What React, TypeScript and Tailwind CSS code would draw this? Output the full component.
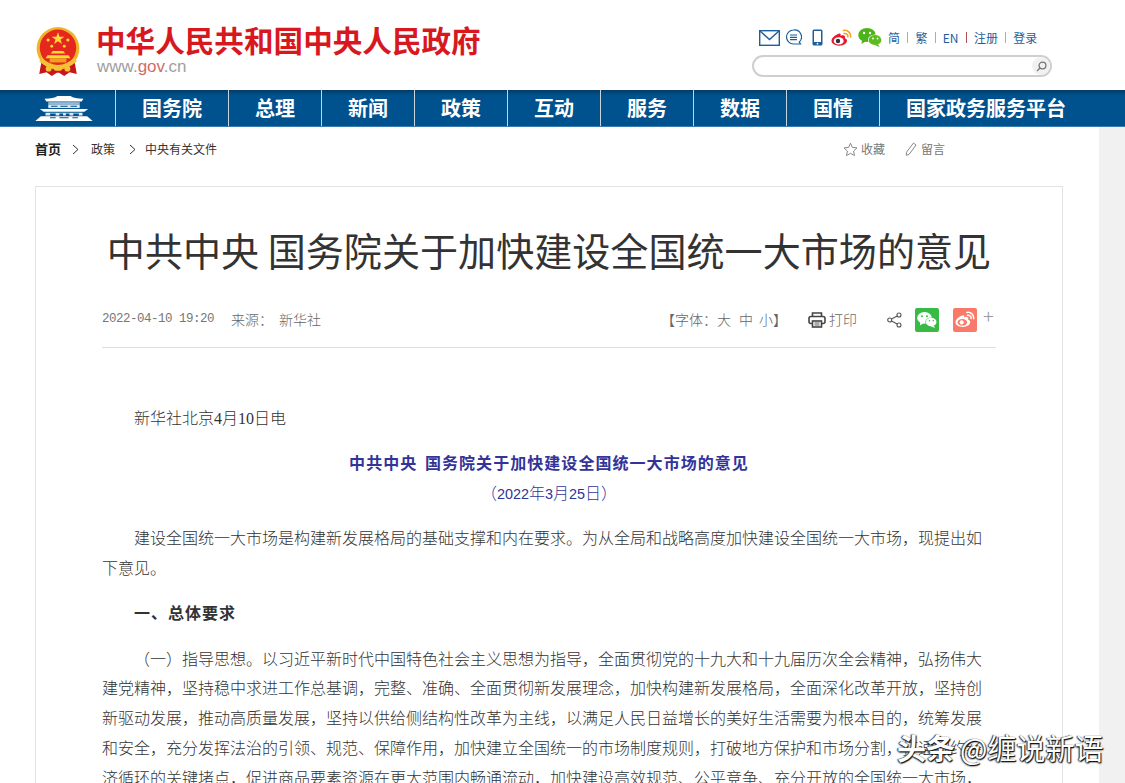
import React from "react";

const cjk = { fontFamily: '"Noto Sans CJK SC", sans-serif' };

function Emblem() {
  return (
    <svg width="46" height="49" viewBox="0 0 44 47" className="shrink-0">
      <path d="M6 34 L4 45 L11 43.5 L16 47 L21 44 L23 44 L28 47 L33 43.5 L40 45 L38 34 Z" fill="#c8161d" />
      <circle cx="22" cy="20.5" r="20.5" fill="#f0b429" />
      <circle cx="22" cy="20" r="17.5" fill="#e5281e" />
      <path d="M6 29 Q22 44 38 29 L40 33 Q22 48 4 33 Z" fill="#f4c233" />
      <path d="M22 5 l1.5 4.3 4.6 0 -3.7 2.7 1.4 4.4 -3.8-2.7 -3.8 2.7 1.4-4.4 -3.7-2.7 4.6 0 Z" fill="#ffd83a" />
      <circle cx="12.5" cy="12.5" r="1.5" fill="#ffd83a" />
      <circle cx="31.5" cy="12.5" r="1.5" fill="#ffd83a" />
      <circle cx="16" cy="18.5" r="1.4" fill="#ffd83a" />
      <circle cx="28" cy="18.5" r="1.4" fill="#ffd83a" />
      <path d="M17 23 h10 l2 2.5 h-14 Z M12 27 h20 l2 3 h-24 Z" fill="#ffd83a" />
      <path d="M14 30 h16 v4 h-16 Z" fill="#f0a020" />
      <circle cx="13" cy="40" r="2.8" fill="#f4c233" />
      <circle cx="31" cy="40" r="2.8" fill="#f4c233" />
      <rect x="18" y="38" width="8" height="4" rx="2" fill="#f4c233" />
    </svg>
  );
}

function Palace() {
  return (
    <svg width="60" height="25" viewBox="0 0 62 27" fill="#fff">
      <path d="M10 3 Q20 3 24 0 h14 Q42 3 52 3 L50 6 H12 Z" />
      <rect x="14" y="7" width="34" height="1.2" />
      <path d="M14 9 h34 v4 h-34 Z" fill="#dfe9f2" />
      <path d="M17 10.5 h7 v1 h-7 Z M27 10.5 h8 v1 h-8 Z M38 10.5 h7 v1 h-7 Z" fill="#00528f" />
      <path d="M5 14 H57 L53 17 H9 Z" />
      <path d="M11 18 h40 v3 h-40 Z" fill="#dfe9f2" />
      <path d="M16 19 h6 v3 h-6 Z M26 19 h4 v3 h-4 Z M33 19 h4 v3 h-4 Z M41 19 h6 v3 h-6 Z" fill="#00528f" />
      <path d="M6 22 H56 L62 27 H0 Z" />
      <path d="M16 23 h6 v1 h-6 Z M26 23 h10 v1 h-10 Z M40 23 h6 v1 h-6 Z" fill="#00528f" />
    </svg>
  );
}

function Mail() {
  return (
    <svg width="21" height="16" viewBox="0 0 21 16" fill="none" stroke="#1d5f9c" strokeWidth="1.4">
      <rect x="0.7" y="0.7" width="19.6" height="14.6" />
      <path d="M1 1 L10.5 9.5 L20 1" />
    </svg>
  );
}

function Chat() {
  return (
    <svg width="17" height="17" viewBox="0 0 17 17" fill="none" stroke="#1d5f9c" strokeWidth="1.2">
      <path d="M8.5 1 a7 7 0 1 0 0 14 h7 l-1.2-2 a7 7 0 0 0 -5.8-12 Z" />
      <path d="M5 6 h7 M5 8.3 h7 M5 10.6 h7" />
    </svg>
  );
}

function Phone() {
  return (
    <svg width="11" height="17" viewBox="0 0 11 17">
      <rect x="0.5" y="0.5" width="10" height="16" rx="1.5" fill="#1d5f9c" />
      <rect x="2" y="2" width="7" height="11" fill="#fff" />
      <circle cx="5.5" cy="14.7" r="0.9" fill="#fff" />
    </svg>
  );
}

function Weibo({ body = "#e6162d", eye = "#fff", arc = "#f5a11c", size = 21 }: { body?: string; eye?: string; arc?: string; size?: number }) {
  return (
    <svg width={size} height={(size * 17) / 21} viewBox="0 0 21 17">
      <path d="M8.5 4.5 C4.5 5.5 0.5 9 0.5 11.8 C0.5 14.7 4 16.7 8.2 16.7 C12.6 16.7 16 14.4 16 11.5 C16 9.9 14.6 9.5 13.8 9.2 C14.3 7.7 14 6.5 12.4 6.2 C11.2 6 9.8 6.6 9.5 6.7 C9.9 5.3 9.7 4.3 8.5 4.5 Z" fill={body} />
      <ellipse cx="7.7" cy="11.9" rx="5" ry="3.6" fill={eye} />
      <circle cx="7" cy="12" r="2.2" fill={body === "#fff" ? "#fff" : "#333"} />
      <path d="M12.5 1.5 C16 0.6 20 3.5 19.6 8" fill="none" stroke={arc} strokeWidth="1.6" strokeLinecap="round" />
      <path d="M13 4.5 C15 4 17.3 5.6 16.9 8" fill="none" stroke={arc} strokeWidth="1.5" strokeLinecap="round" />
    </svg>
  );
}

function Wechat({ a = "#4db31b", b = "#5cbc1e", eye = "#fff", edge = "#fff", w = 24, h = 19 }: { a?: string; b?: string; eye?: string; edge?: string; w?: number; h?: number }) {
  return (
    <svg width={w} height={h} viewBox="0 0 24 19">
      <ellipse cx="9" cy="7" rx="8.8" ry="7" fill={a} />
      <path d="M4 12 L3.5 16 L8 13 Z" fill={a} />
      <ellipse cx="17" cy="12" rx="7" ry="5.6" fill={edge} />
      <ellipse cx="17" cy="12" rx="6.4" ry="5.1" fill={b} />
      <path d="M20 16 L21.5 19 L16.5 17 Z" fill={b} />
      <circle cx="6" cy="5" r="1.2" fill={eye} />
      <circle cx="12" cy="5" r="1.2" fill={eye} />
      <circle cx="15" cy="10.5" r="0.9" fill={eye} />
      <circle cx="19.5" cy="10.5" r="0.9" fill={eye} />
    </svg>
  );
}

function Sep({ c }: { c: string }) {
  return <span className="w-px h-[11px] mx-[7.2px]" style={{ backgroundColor: c }} />;
}

const navItems = ["总理", "新闻", "政策", "互动", "服务", "数据", "国情"];

function Chevron() {
  return (
    <svg width="7" height="11" viewBox="0 0 7 11" fill="none" stroke="#333" strokeWidth="1">
      <path d="M1 1 L6 5.5 L1 10" />
    </svg>
  );
}

const serifDigit = { fontFamily: '"Liberation Serif", serif', fontWeight: 400 };
const sansDigit = { fontFamily: '"Liberation Sans", sans-serif', fontWeight: 400 };

export default function App() {
  return (
    <div className="h-[783px] w-[1125px] overflow-hidden bg-white relative" style={cjk}>
      <header className="h-[90px] flex justify-between pl-[35px] pr-[73px]">
        <div className="flex items-start pt-[26px]">
          <div className="pt-[1px]"><Emblem /></div>
          <div className="ml-[15px]">
            <div className="text-[29.6px] leading-[30px] font-bold text-[#d8181f] -mt-[1px]">中华人民共和国中央人民政府</div>
            <div className="text-[17px] leading-[18px] mt-[3px] ml-px text-[#a0a0a0]" style={{ fontFamily: '"Liberation Sans", sans-serif' }}>
              www.<span className="text-[#d36a6a]">gov</span>.cn
            </div>
          </div>
        </div>
        <div className="w-[300px] pt-[28px]">
          <div className="flex items-center h-[19px] pl-[7px]">
            <Mail />
            <span className="ml-[5px]"><Chat /></span>
            <span className="ml-[10px]"><Phone /></span>
            <span className="ml-[8px]"><Weibo /></span>
            <span className="ml-[6px]"><Wechat /></span>
            <div className="flex items-center ml-[6px] text-[12px] text-[#1d5f9c]">
              <span>简</span><Sep c="#e0a060" />
              <span>繁</span><Sep c="#e0a060" />
              <span>EN</span><Sep c="#b05050" />
              <span>注册</span><Sep c="#e0a060" />
              <span>登录</span>
            </div>
          </div>
          <div className="mt-[8px] h-[22px] rounded-full border-2 border-[#cfcfcf] flex items-center justify-end">
            <div className="w-[18px] h-[18px] rounded-full bg-[#f1f1f1] flex items-center justify-center">
              <svg width="11" height="11" viewBox="0 0 11 11" fill="none" stroke="#777" strokeWidth="1.3">
                <circle cx="6.5" cy="4.5" r="3.4" />
                <path d="M4 7 L1 10" />
              </svg>
            </div>
          </div>
        </div>
      </header>

      <nav className="h-[37px] flex text-white font-bold text-[20px] border-b border-[#3a7cb0] bg-gradient-to-b from-[#033b68] via-[#00528f] via-[15%] to-[#00528f]">
        <div className="w-[115px] flex items-center justify-end pr-[21px] pt-[1px]"><Palace /></div>
        <div className="w-[113px] border-l border-[#c9d3dc] flex items-center justify-center">国务院</div>
        {navItems.map((n) => (
          <div key={n} className="w-[93px] border-l border-[#c9d3dc] flex items-center justify-center">{n}</div>
        ))}
        <div className="flex-1 border-l border-[#c9d3dc] flex items-center pl-[26px]">国家政务服务平台</div>
      </nav>

      <div className="flex h-[656px]">
        <main className="w-[1099px] pl-[35px] pr-[36px]">
          <div className="h-[59px] flex items-start pt-[13px] text-[12px] leading-[18px] text-[#333]">
            <span className="font-bold text-[13px] text-[#222]">首页</span>
            <span className="ml-[11px] mt-[4px]"><Chevron /></span>
            <span className="ml-[12px]">政策</span>
            <span className="ml-[14px] mt-[4px]"><Chevron /></span>
            <span className="ml-[9px]">中央有关文件</span>
            <div className="ml-auto flex items-center text-[#777] mr-[118px]">
              <svg width="15" height="15" viewBox="0 0 15 15" fill="none" stroke="#888" strokeWidth="1">
                <path d="M7.5 1.2 L9.4 5.4 L14 5.9 L10.6 9 L11.5 13.6 L7.5 11.3 L3.5 13.6 L4.4 9 L1 5.9 L5.6 5.4 Z" />
              </svg>
              <span className="ml-[3px]">收藏</span>
              <svg className="ml-[20px]" width="12" height="14" viewBox="0 0 12 14" fill="none" stroke="#888" strokeWidth="1">
                <path d="M8.5 1 L11 3 L4 12.5 L1.2 13.2 L1.5 10.2 Z" />
              </svg>
              <span className="ml-[4px]">留言</span>
            </div>
          </div>

          <article className="w-[1028px] h-[700px] border border-[#e3e3e3] px-[66px]">
            <h1 className="text-[38.1px] leading-[50px] mt-[38px] font-normal text-[#333] text-center whitespace-nowrap">
              中共中央 国务院关于加快建设全国统一大市场的意见
            </h1>
            <div className="mt-[30px] h-[43px] pb-[13px] border-b border-[#dedede] flex items-center text-[14px] font-light text-[#666]">
              <span className="text-[12.5px] tracking-[-0.5px] font-normal text-[#777]" style={{ fontFamily: '"Liberation Mono", monospace' }}>2022-04-10 19:20</span>
              <span className="ml-[17px]">来源：</span>
              <span className="ml-[6px]">新华社</span>
              <div className="ml-auto flex items-center">
                <span>【字体：大</span>
                <span className="ml-[8px]">中</span>
                <span className="ml-[6px]">小】</span>
                <svg className="ml-[21px]" width="18" height="16" viewBox="0 0 18 16" fill="none" stroke="#444" strokeWidth="1.6">
                  <path d="M4.5 4 V1 H13.5 V4" />
                  <rect x="1" y="4.5" width="16" height="7" rx="2" />
                  <rect x="4.5" y="9" width="9" height="6" fill="#fff" />
                  <path d="M6.5 11 h5 M6.5 13 h5" strokeWidth="0.9" />
                </svg>
                <span className="ml-[3px]">打印</span>
                <svg className="ml-[30px]" width="15" height="16" viewBox="0 0 15 16" fill="none" stroke="#555" strokeWidth="1.1">
                  <circle cx="2.7" cy="8" r="2" />
                  <circle cx="12" cy="3" r="2" />
                  <circle cx="12" cy="13" r="2" />
                  <path d="M4.5 7 L10.2 4 M4.5 9 L10.2 12" />
                </svg>
                <span className="ml-[13px] w-[24px] h-[24px] rounded-[2px] bg-[#38bb44] flex items-center justify-center">
                  <Wechat a="#fff" b="#fff" eye="#38bb44" edge="#38bb44" w={20} h={16} />
                </span>
                <span className="ml-[14px] w-[24px] h-[24px] rounded-[2px] bg-[#fa7a6a] flex items-center justify-center">
                  <Weibo body="#fff" eye="#fa7a6a" arc="#fff" size={20} />
                </span>
                <span className="ml-[6px] w-[13px] mb-[8px] text-[20px] leading-[18px] text-[#999] font-light">+</span>
              </div>
            </div>

            <div className="text-[16px] leading-[29.75px] text-[#333] font-light pt-[55px]">
              <p className="mb-[15px] indent-[32px]">新华社北京<span className="leading-none" style={serifDigit}>4</span>月<span className="leading-none" style={serifDigit}>10</span>日电</p>
              <p className="mb-[16px] text-center text-[#33339a]">
                <span className="font-bold tracking-[1.05px] [word-spacing:3px]">中共中央 国务院关于加快建设全国统一大市场的意见</span>
                <br />
                <span>（<span className="leading-none text-[14.4px]" style={sansDigit}>2022</span>年<span className="leading-none text-[14.4px]" style={sansDigit}>3</span>月<span className="leading-none text-[14.4px]" style={sansDigit}>25</span>日）</span>
              </p>
              <p className="mb-[15px] indent-[32px]">建设全国统一大市场是构建新发展格局的基础支撑和内在要求。为从全局和战略高度加快建设全国统一大市场，现提出如下意见。</p>
              <p className="mb-[16px] indent-[32px] font-bold tracking-[1px]">一、总体要求</p>
              <p className="indent-[32px]">（一）指导思想。以习近平新时代中国特色社会主义思想为指导，全面贯彻党的十九大和十九届历次全会精神，弘扬伟大建党精神，坚持稳中求进工作总基调，完整、准确、全面贯彻新发展理念，加快构建新发展格局，全面深化改革开放，坚持创新驱动发展，推动高质量发展，坚持以供给侧结构性改革为主线，以满足人民日益增长的美好生活需要为根本目的，统筹发展和安全，充分发挥法治的引领、规范、保障作用，加快建立全国统一的市场制度规则，打破地方保护和市场分割，打通制约经济循环的关键堵点，促进商品要素资源在更大范围内畅通流动，加快建设高效规范、公平竞争、充分开放的全国统一大市场，</p>
            </div>
          </article>
        </main>
        <aside className="flex-1 bg-[#f1f1f1]" />
      </div>

      <div
        className="absolute left-[897px] top-[729px] text-[29px] leading-[36px] text-white whitespace-nowrap"
        style={{ textShadow: "1px 1px 1px #111, -1px 0 1px #333, 0 1px 2px #222" }}
      >
        <span className="font-bold">头条</span><span className="ml-[5px]">@缠说新语</span>
      </div>
    </div>
  );
}
